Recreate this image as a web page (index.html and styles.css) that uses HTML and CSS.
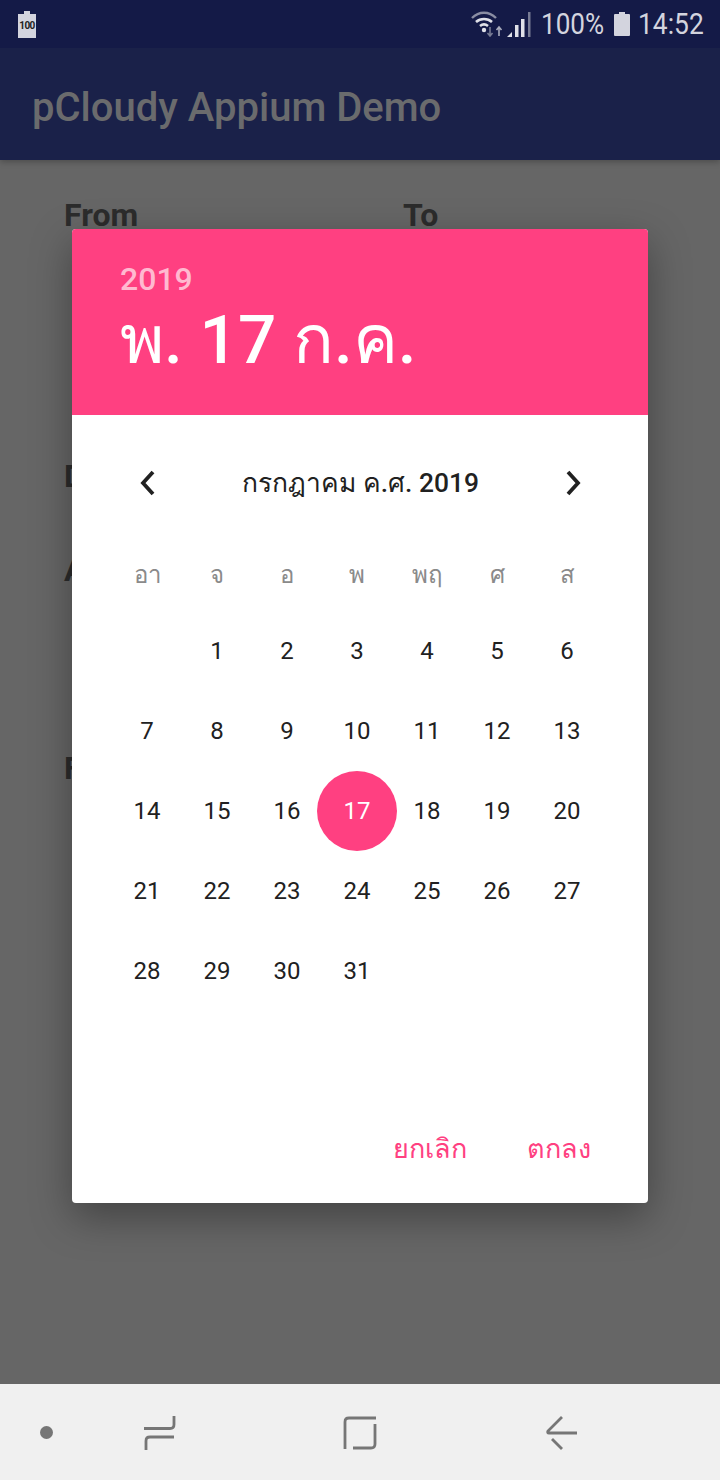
FILE: index.html
```html
<!DOCTYPE html>
<html>
<head>
  <meta charset="UTF-8">
  <title>pCloudy Appium Demo</title>
  <link rel="stylesheet" href="styles.css">
</head>
<body>
  <div class="phone">
    <div class="statusbar">
      <svg class="batt-note" width="18" height="27" viewBox="0 0 18 27">
        <path d="M6 0h6v3h6v24H0V3h6z" fill="#d3d4de"/>
      </svg>
      <span class="batt-num">100</span>
      <div class="status-right">
        <svg class="wifi" width="34" height="26" viewBox="0 0 34 26" fill="none">
          <path d="M1 7C8 0 18 0 25 7" stroke-width="2.400" stroke="#8a8da3"/>
          <path d="M5 11c4.500-4 11.500-4 16 0" stroke-width="2.600" stroke="#e0e1e8"/>
          <path d="M9 15c2.500-2 5.500-2 8 0" stroke-width="2.600" stroke="#e0e1e8"/>
          <circle cx="13" cy="19" r="2.200" fill="#e0e1e8"/>
          <path d="M19 16v9M16.500 22l2.500 3 2.500-3" stroke-width="1.600" stroke="#777b93"/>
          <path d="M28 25v-9M25.500 19l2.500-3 2.500 3" stroke-width="1.600" stroke="#a9acbc"/>
        </svg>
        <svg class="signal" width="26" height="28" viewBox="0 0 26 28">
          <path d="M1 27l5-5v5z" fill="#e0e1e8"/>
          <rect x="9" y="15" width="3.500" height="12" fill="#e0e1e8"/>
          <rect x="15" y="9" width="3.500" height="18" fill="#e0e1e8"/>
          <rect x="22" y="2" width="2.500" height="25" fill="#777b93"/>
        </svg>
        <span class="pct">100%</span>
        <svg class="batt" width="16" height="24" viewBox="0 0 16 24">
          <path d="M5 0h6v2h4a1 1 0 0 1 1 1v20a1 1 0 0 1-1 1H1a1 1 0 0 1-1-1V3a1 1 0 0 1 1-1h4z" fill="#d3d4de"/>
        </svg>
        <span class="clock">14:52</span>
      </div>
    </div>
    <div class="appbar">pCloudy Appium Demo</div>
    <div class="content">
      <div class="row-top"><span class="lbl lbl-from">From</span><span class="lbl">To</span></div>
      <div class="lbl row-d">D</div>
      <div class="lbl row-a">A</div>
      <div class="lbl row-f">F</div>
    </div>
    <div class="navbar">
      <span class="dot"></span>
      <svg class="nav-recents" width="40" height="40" viewBox="0 0 40 40" fill="none" stroke="#767676" stroke-width="2.800">
        <path d="M4 16.500H30q4 0 4-4V4"/>
        <path d="M34 25H10q-4 0-4 4V38"/>
      </svg>
      <svg class="nav-home" width="40" height="40" viewBox="0 0 40 40" fill="none" stroke="#767676" stroke-width="2.800">
        <path d="M36 6H9q-4 0-4 4V37"/>
        <path d="M35 12V32q0 4-4 4H13"/>
      </svg>
      <svg width="40" height="40" viewBox="0 0 40 40" fill="none" stroke="#767676" stroke-width="2.800">
        <path d="M20 5L6 19q-1 2 1 2H35"/>
        <path d="M10 27L20 37"/>
      </svg>
    </div>

    <div class="dialog">
      <div class="dlg-head">
        <div class="dlg-year">2019</div>
        <div class="dlg-date">พ. 17 ก.ค.</div>
      </div>
      <div class="dlg-body">
        <div class="month-row">
          <svg width="20" height="28" viewBox="0 0 20 28" fill="none" stroke="#212121" stroke-width="3.800">
            <path d="M16 3L6 14l10 11"/>
          </svg>
          <span class="month">กรกฎาคม ค.ศ. 2019</span>
          <svg width="20" height="28" viewBox="0 0 20 28" fill="none" stroke="#212121" stroke-width="3.800">
            <path d="M4 3l10 11L4 25"/>
          </svg>
        </div>
        <div class="grid week">
          <span>อา</span><span>จ</span><span>อ</span><span>พ</span><span>พฤ</span><span>ศ</span><span>ส</span>
        </div>
        <div class="grid days">
          <span></span><span>1</span><span>2</span><span>3</span><span>4</span><span>5</span><span>6</span>
          <span>7</span><span>8</span><span>9</span><span>10</span><span>11</span><span>12</span><span>13</span>
          <span>14</span><span>15</span><span>16</span><span class="today">17</span><span>18</span><span>19</span><span>20</span>
          <span>21</span><span>22</span><span>23</span><span>24</span><span>25</span><span>26</span><span>27</span>
          <span>28</span><span>29</span><span>30</span><span>31</span>
        </div>
        <div class="actions">
          <span>ยกเลิก</span>
          <span>ตกลง</span>
        </div>
      </div>
    </div>
  </div>
</body>
</html>
```

FILE: styles.css
```css
html, body {
  margin: 0;
  padding: 0;
}

body {
  font-family: Roboto, "Noto Sans", "DejaVu Sans", sans-serif;
}

.phone {
  position: relative;
  width: 720px;
  height: 1480px;
  overflow: hidden;
  display: flex;
  flex-direction: column;
  background-color: #666;
}

/* status bar */
.statusbar {
  position: relative;
  height: 48px;
  flex: none;
  display: flex;
  align-items: center;
  justify-content: space-between;
  padding: 0 16px 0 18px;
  box-sizing: border-box;
  background-color: #141a47;
}

.batt-num {
  position: absolute;
  left: 18px;
  top: 19px;
  width: 18px;
  text-align: center;
  font-size: 10px;
  font-weight: 700;
  line-height: 14px;
  letter-spacing: -0.5px;
  color: #222;
}

.status-right {
  display: flex;
  align-items: center;
  color: #d3d4de;
  font-size: 29px;
}

.wifi {
  margin-right: 1px;
}

.signal {
  margin-right: 9px;
}

.pct {
  margin-right: 7px;
  transform: scaleX(0.9);
  transform-origin: left center;
  width: 66px;
}

.batt {
  margin-right: 8px;
}

.clock {
  width: 66px;
  transform: scaleX(0.91);
  transform-origin: left center;
}

/* app bar */
.appbar {
  height: 112px;
  flex: none;
  box-sizing: border-box;
  padding: 0 32px;
  line-height: 119px;
  font-size: 40px;
  font-weight: 500;
  color: #6a6b6d;
  background-color: #1a2149;
  box-shadow: 0 2px 6px rgba(0, 0, 0, 0.25);
}

/* form behind the dialog */
.content {
  flex: 1;
  padding: 0 64px;
  font-size: 32px;
  font-weight: 700;
  color: #2c2c2c;
}

.lbl {
  line-height: 36px;
}

.row-top {
  display: flex;
  margin-top: 37px;
}

.lbl-from {
  width: 339px;
}

.row-d {
  margin-top: 225px;
}

.row-a {
  margin-top: 58px;
}

.row-f {
  margin-top: 162px;
}

/* nav bar */
.navbar {
  height: 96px;
  flex: none;
  display: flex;
  align-items: center;
  padding-left: 40px;
  box-sizing: border-box;
  background-color: #f0f0f0;
}

.dot {
  width: 13px;
  height: 13px;
  border-radius: 50%;
  background-color: #767676;
  margin-right: 87px;
}

.nav-recents {
  margin-right: 160px;
}

.nav-home {
  margin-right: 162px;
}

/* date picker */
.dialog {
  position: absolute;
  left: 72px;
  top: 229px;
  width: 576px;
  height: 974px;
  border-radius: 4px;
  overflow: hidden;
  background-color: #fff;
  display: flex;
  flex-direction: column;
  z-index: 1;
}

.phone::after {
  content: "";
  position: absolute;
  left: 72px;
  top: 229px;
  width: 576px;
  height: 974px;
  border-radius: 4px;
  box-shadow: 0 14px 40px rgba(0, 0, 0, 0.35);
}

.dlg-head {
  height: 186px;
  flex: none;
  box-sizing: border-box;
  padding: 30px 48px 0;
  background-color: #ff4081;
  color: #fff;
}

.dlg-year {
  font-size: 32px;
  line-height: 40px;
  font-weight: 500;
  color: #ffb9d0;
}

.dlg-date {
  font-size: 67.5px;
  line-height: 82px;
  font-weight: 500;
}

.dlg-body {
  flex: 1;
  position: relative;
  padding: 0 32px;
}

.month-row {
  height: 136px;
  display: flex;
  align-items: center;
  justify-content: space-between;
  padding: 0 32px 0 33px;
}

.month {
  font-size: 26.4px;
  font-weight: 500;
  color: #212121;
}

.grid {
  display: grid;
  grid-template-columns: repeat(7, 70px);
  justify-items: center;
  align-items: center;
  margin: 0 4px 0 8px;
}

.week {
  height: 46px;
  font-size: 24px;
  color: #8a8a8a;
}

.days {
  grid-auto-rows: 80px;
  margin-top: 14px;
  font-size: 24px;
  color: #212121;
}

.days .today {
  width: 80px;
  height: 80px;
  line-height: 80px;
  text-align: center;
  border-radius: 50%;
  background-color: #ff4081;
  color: #fff;
}

.actions {
  position: absolute;
  right: 57px;
  bottom: 33px;
  display: flex;
  gap: 60px;
  font-size: 27px;
  font-weight: 500;
  color: #ff4081;
}
```
